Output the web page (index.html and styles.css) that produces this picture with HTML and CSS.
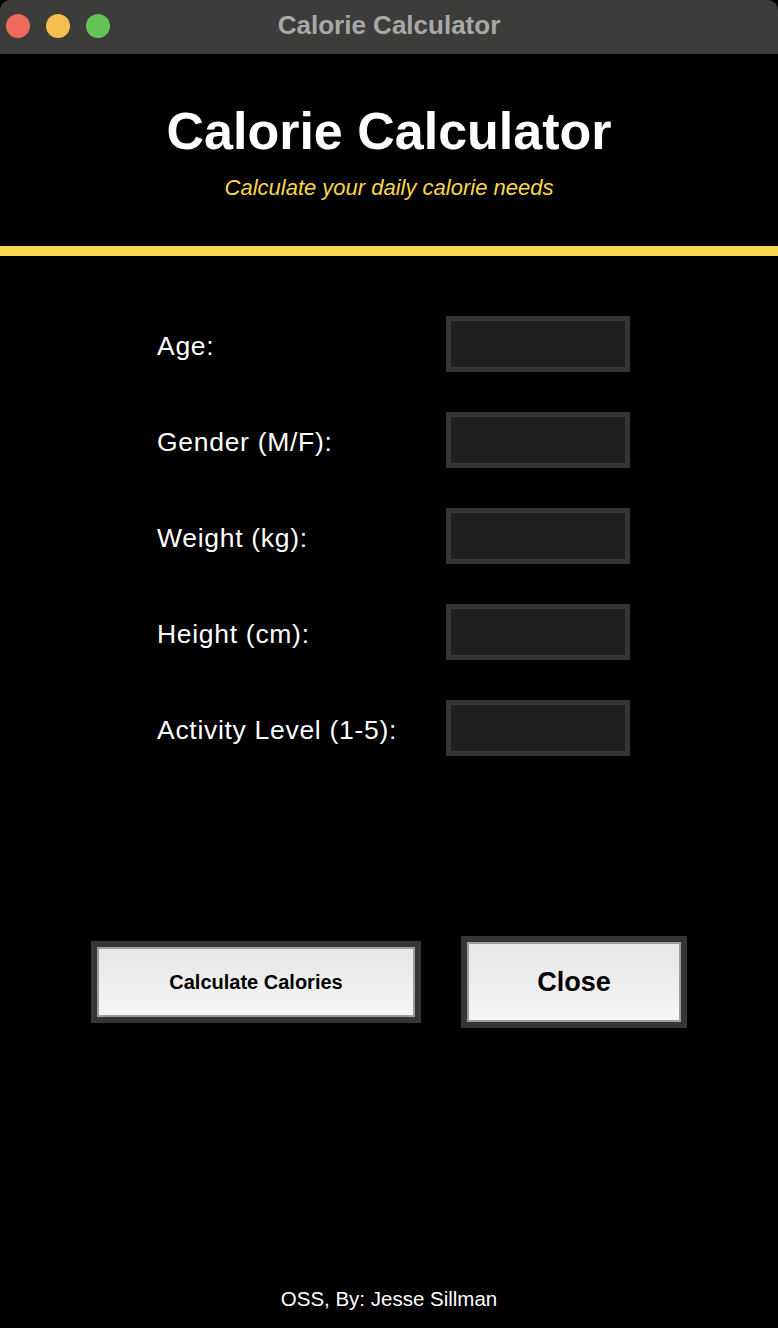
FILE: index.html
```html
<!DOCTYPE html>
<html lang="en">
<head>
<meta charset="utf-8">
<title>Calorie Calculator</title>
<link rel="stylesheet" href="styles.css">
</head>
<body>
<div class="window">
  <div class="titlebar">
    <div class="lights">
      <span class="light red"></span>
      <span class="light yellow"></span>
      <span class="light green"></span>
    </div>
    <div class="wintitle">Calorie Calculator</div>
  </div>
  <header class="header">
    <h1 class="title">Calorie Calculator</h1>
    <p class="subtitle">Calculate your daily calorie needs</p>
  </header>
  <div class="rule"></div>
  <main class="form">
    <label class="label" for="age">Age:</label>
    <input class="field" id="age" type="text">
    <label class="label" for="gender">Gender (M/F):</label>
    <input class="field" id="gender" type="text">
    <label class="label" for="weight">Weight (kg):</label>
    <input class="field" id="weight" type="text">
    <label class="label" for="height">Height (cm):</label>
    <input class="field" id="height" type="text">
    <label class="label" for="activity">Activity Level (1-5):</label>
    <input class="field" id="activity" type="text">
  </main>
  <div class="actions">
    <button class="btn btn-calc" type="button">Calculate Calories</button>
    <button class="btn btn-close" type="button">Close</button>
  </div>
  <footer class="footer">OSS, By: Jesse Sillman</footer>
</div>
</body>
</html>
```

FILE: styles.css
```css
* { box-sizing: border-box; }
html, body { margin: 0; padding: 0; background: #000; }
body { font-family: "Liberation Sans", Arial, Helvetica, sans-serif; color: #fff; }
.window { width: 778px; min-height: 1328px; background: #000; }

.titlebar {
  position: relative;
  height: 54px;
  background: #3c3d3b;
  border-radius: 10px 10px 0 0;
  display: flex;
  align-items: center;
  justify-content: center;
}
.lights {
  position: absolute;
  left: 6px;
  top: 14px;
  display: flex;
  gap: 16px;
}
.light { width: 24px; height: 24px; border-radius: 50%; display: block; }
.red { background: #ee6a5f; }
.yellow { background: #f5be4f; }
.green { background: #61c454; }
.wintitle {
  font-weight: bold;
  font-size: 26px;
  color: #a8a8a7;
  line-height: 30px;
  margin-top: -4px;
}

.header {
  height: 192px;
  padding-top: 47px;
  text-align: center;
}
.title {
  margin: 0;
  font-size: 52px;
  line-height: 60px;
  font-weight: bold;
  color: #fff;
}
.subtitle {
  margin: 14px 0 0;
  font-size: 22px;
  line-height: 26px;
  font-style: italic;
  color: #fad74a;
}
.rule { height: 10px; background: #fad74a; }

.form {
  display: grid;
  grid-template-columns: 289px 184px;
  grid-auto-rows: 56px;
  row-gap: 40px;
  padding: 60px 0 0 157px;
}
.label {
  height: 56px;
  font-size: 26.5px;
  letter-spacing: 0.7px;
  line-height: 56px;
  padding-top: 2px;
  color: #fff;
}
.field {
  width: 184px;
  height: 56px;
  margin: 0;
  background: #1f1f1f;
  border: 5px solid #353535;
  outline: none;
  color: #fff;
  font: inherit;
}

.actions {
  margin-top: 180px;
  height: 92px;
  display: flex;
  justify-content: center;
  align-items: center;
  gap: 40px;
}
.btn {
  margin: 0;
  padding: 0;
  font-family: "Liberation Sans", Arial, Helvetica, sans-serif;
  font-weight: bold;
  color: #000;
  border: 6px solid #353535;
  background: linear-gradient(#e6e6e6, #f6f6f6);
  box-shadow: inset 0 0 0 2px #9c9c9c;
  cursor: pointer;
}
.btn-calc { width: 330px; height: 82px; font-size: 20px; }
.btn-close { width: 226px; height: 92px; font-size: 27px; }

.footer {
  margin-top: 259px;
  text-align: center;
  font-size: 20.5px;
  line-height: 24px;
  color: #fff;
}
```
